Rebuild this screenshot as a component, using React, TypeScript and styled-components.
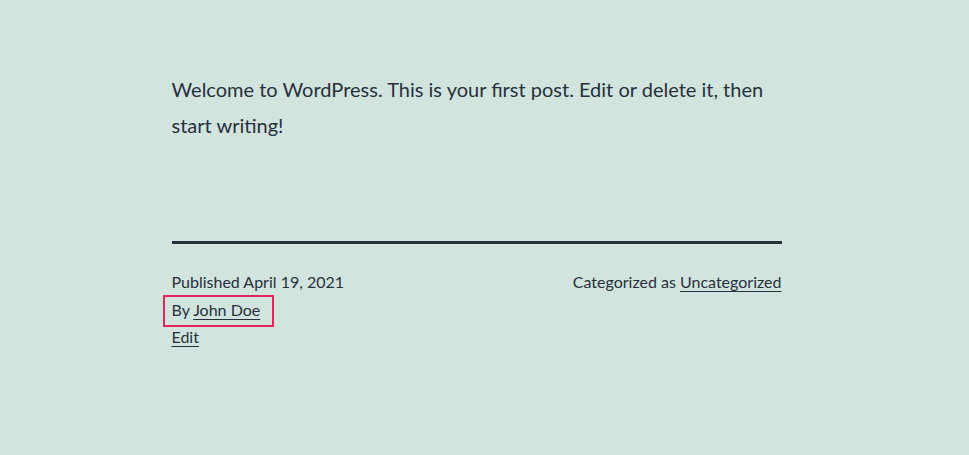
import React from "react";
import styled, { createGlobalStyle } from "styled-components";

const GlobalStyle = createGlobalStyle`
  html, body {
    margin: 0;
    padding: 0;
    background: #d1e4dd;
  }
  body {
    font-family: Lato, "Liberation Sans", sans-serif;
    color: #28303d;
  }
`;

const Page = styled.div`
  box-sizing: border-box;
  width: 969px;
  height: 455px;
  padding-right: 16px;
  background: #d1e4dd;
  overflow: hidden;
`;

const Column = styled.article`
  width: 610px;
  margin: 0 auto;
  padding-top: 71px;
  display: flex;
  flex-direction: column;
`;

const Lead = styled.p`
  margin: 0;
  font-size: 20px;
  line-height: 36px;
`;

const Rule = styled.hr`
  margin: 98px 0 0;
  border: 0;
  height: 3px;
  background: #28303d;
`;

const Meta = styled.footer`
  display: flex;
  justify-content: space-between;
  align-items: flex-start;
  padding-top: 24px;
  font-size: 16px;
  line-height: 27.5px;
`;

const MetaCol = styled.div`
  display: flex;
  flex-direction: column;
  align-items: flex-start;
`;

const Line = styled.div<{ $boxed?: boolean }>`
  position: relative;
  ${(p) =>
    p.$boxed &&
    `
    &::after {
      content: "";
      position: absolute;
      left: -9px;
      right: -14px;
      top: -1px;
      bottom: -4px;
      border: 2px solid #e2255a;
    }
  `}
`;

const Link = styled.a`
  color: #28303d;
  text-decoration: underline;
  text-underline-offset: 3px;
  text-decoration-thickness: 1px;
`;

export default function App() {
  return (
    <Page>
      <GlobalStyle />
      <Column>
        <Lead>
          Welcome to WordPress. This is your first post. Edit or delete it, then start writing!
        </Lead>
        <Rule />
        <Meta>
          <MetaCol>
            <Line>Published April 19, 2021</Line>
            <Line $boxed>
              By <Link href="#">John Doe</Link>
            </Line>
            <Line>
              <Link href="#">Edit</Link>
            </Line>
          </MetaCol>
          <MetaCol>
            <Line>
              Categorized as <Link href="#">Uncategorized</Link>
            </Line>
          </MetaCol>
        </Meta>
      </Column>
    </Page>
  );
}
